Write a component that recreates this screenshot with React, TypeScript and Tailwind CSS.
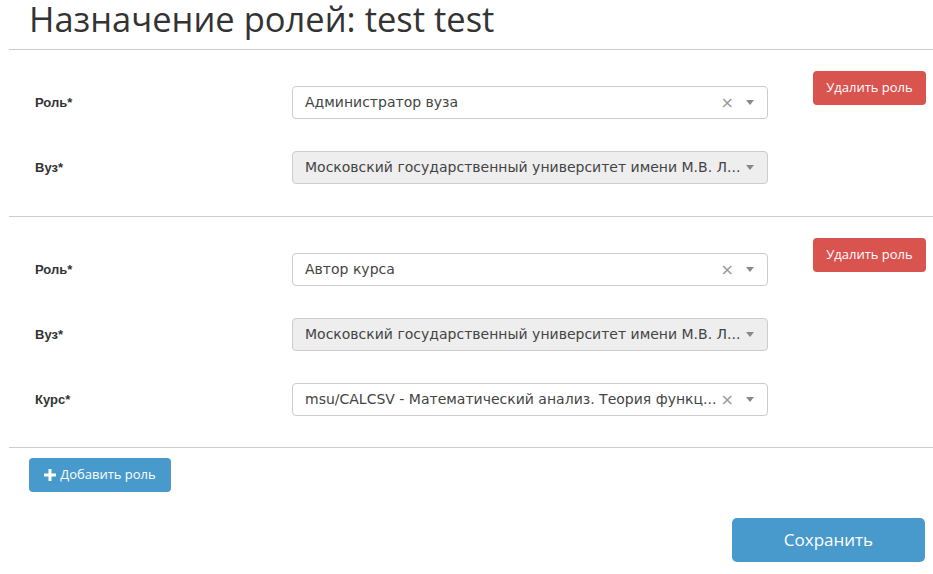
import React from "react";

const Caret = () => (
  <span className="mr-[7px] flex w-[20px] shrink-0 items-center justify-center">
    <span className="block h-0 w-0 border-x-[4px] border-t-[5px] border-x-transparent border-t-[#888]" />
  </span>
);

function Select({ text, disabled, clear }: { text: string; disabled?: boolean; clear?: boolean }) {
  return (
    <div
      className={
        "flex h-[33px] w-[476px] items-center rounded-[4px] border border-[#ccc] pl-[12px] " +
        (disabled ? "bg-[#eee]" : "bg-white")
      }
    >
      <span
        className="min-w-0 flex-1 whitespace-nowrap text-[14px] text-[#444]"
        style={{ fontFamily: '"DejaVu Sans", sans-serif' }}
      >
        {text}
      </span>
      {clear && (
        <span
          className="ml-[2px] mr-[6px] shrink-0 text-[16px] leading-none text-[#999]"
          style={{ fontFamily: '"DejaVu Sans", sans-serif' }}
        >
          ×
        </span>
      )}
      <Caret />
    </div>
  );
}

function Row({ label, children }: { label: string; children: React.ReactNode }) {
  return (
    <div className="flex items-center">
      <div
        className="w-[257px] shrink-0 text-[13px] font-bold text-[#333]"
        style={{ fontFamily: '"Liberation Sans", Arial, sans-serif' }}
      >
        {label}
      </div>
      {children}
    </div>
  );
}

function DeleteBtn() {
  return (
    <button
      className="mr-[7px] mt-[21px] h-[34px] w-[113px] rounded-[4px] bg-[#d9534f] text-[13px] text-white"
      style={{ fontFamily: '"Open Sans", sans-serif' }}
    >
      Удалить роль
    </button>
  );
}

const MSU = "Московский государственный университет имени М.В. Л...";

export default function App() {
  return (
    <div className="min-h-[574px] w-[933px] bg-white" style={{ fontFamily: '"Open Sans", sans-serif' }}>
      <h1 className="pl-[29px] pt-0 text-[34.5px] leading-[37px] text-[#333]" style={{ fontFamily: '"Open Sans", sans-serif' }}>
        Назначение ролей: test test
      </h1>
      <div className="ml-[9px] mt-[12px] border-t border-[#ccc]">
        <div className="flex items-start justify-between border-b border-[#ccc]">
          <div className="flex flex-col gap-[32px] pb-[32px] pl-[26px] pt-[36px]">
            <Row label="Роль*">
              <Select text="Администратор вуза" clear />
            </Row>
            <Row label="Вуз*">
              <Select text={MSU} disabled />
            </Row>
          </div>
          <DeleteBtn />
        </div>
        <div className="flex items-start justify-between border-b border-[#ccc]">
          <div className="flex flex-col gap-[32px] pb-[31px] pl-[26px] pt-[36px]">
            <Row label="Роль*">
              <Select text="Автор курса" clear />
            </Row>
            <Row label="Вуз*">
              <Select text={MSU} disabled />
            </Row>
            <Row label="Курс*">
              <Select text="msu/CALCSV - Математический анализ. Теория функц..." clear />
            </Row>
          </div>
          <DeleteBtn />
        </div>
        <div className="pl-[20px] pt-[10px]">
          <button
            className="flex h-[34px] w-[142px] items-center justify-center gap-[4px] rounded-[4px] bg-[#4899cc] text-[13px] text-white"
            style={{ fontFamily: '"Open Sans", sans-serif' }}
          >
            <svg width="12" height="12" viewBox="0 0 12 12">
              <path d="M4.5 0h3v4.5H12v3H7.5V12h-3V7.5H0v-3h4.5z" fill="white" />
            </svg>
            Добавить роль
          </button>
        </div>
        <div className="flex justify-end pr-[8px] pt-[26px]">
          <button
            className="h-[44px] w-[193px] rounded-[5px] bg-[#4899cc] text-[17px] text-white"
            style={{ fontFamily: '"Open Sans", sans-serif' }}
          >
            Сохранить
          </button>
        </div>
      </div>
    </div>
  );
}
